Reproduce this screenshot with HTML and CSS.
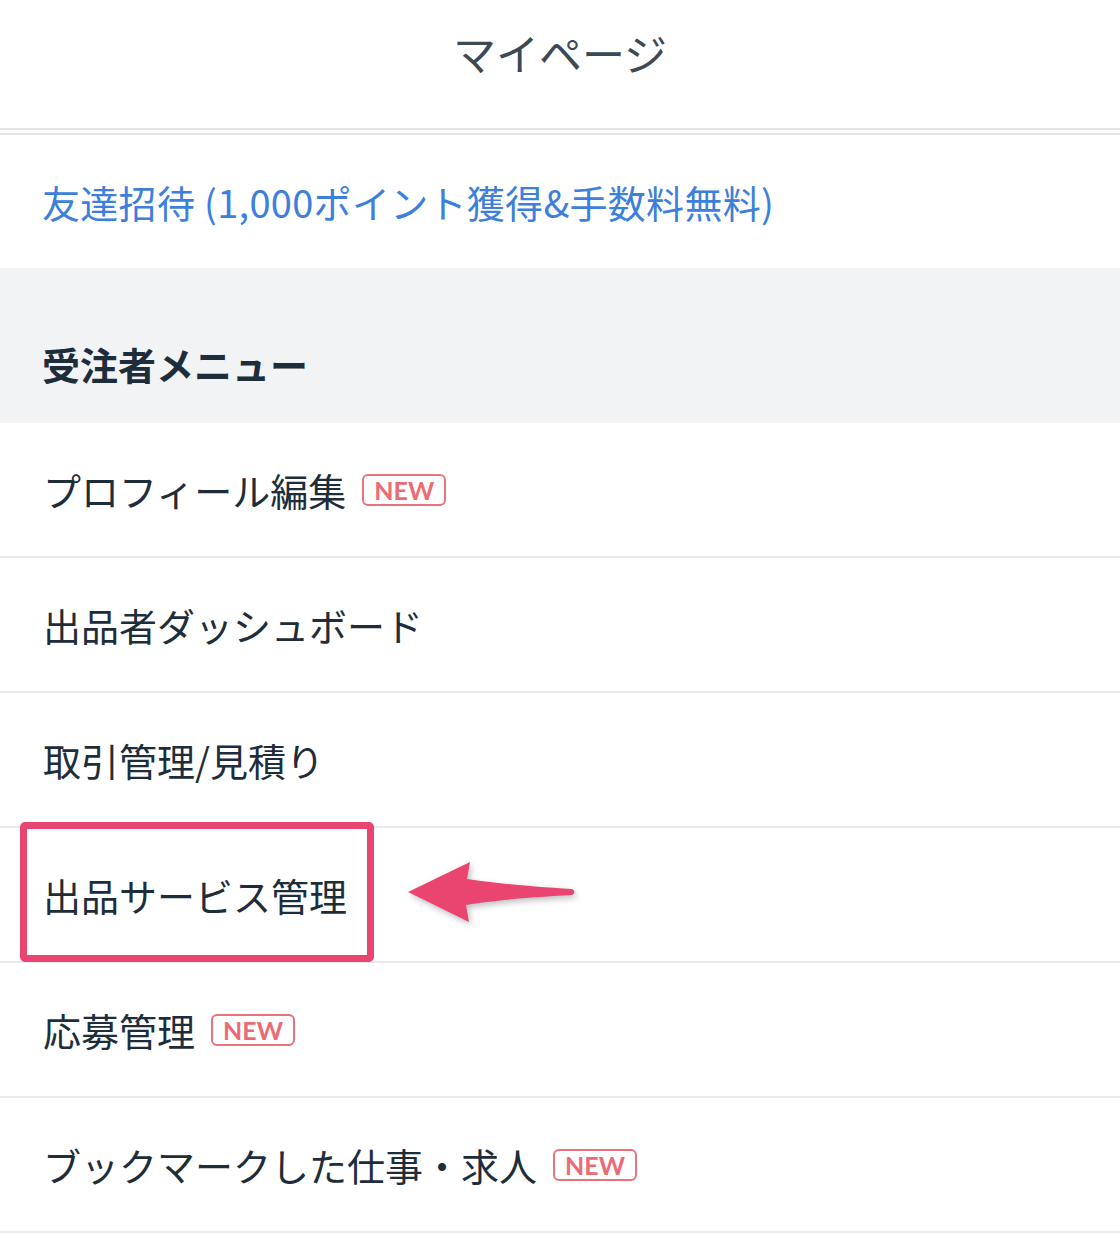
FILE: index.html
```html
<!DOCTYPE html>
<html lang="ja">
<head>
    <meta charset="UTF-8">
    <meta name="viewport" content="width=device-width, initial-scale=1.0">
    <title>マイページ</title>
    <link rel="stylesheet" href="styles.css">
</head>
<body>
    <header class="page-header">
        <h1>マイページ</h1>
    </header>
    <div class="divider"></div>

    <a class="invite" href="#">友達招待 (1,000ポイント獲得&amp;手数料無料)</a>

    <div class="menu-head">受注者メニュー</div>

    <ul class="menu">
        <li><span>プロフィール編集</span><span class="badge">NEW</span></li>
        <li><span>出品者ダッシュボード</span></li>
        <li><span>取引管理/見積り</span></li>
        <li class="highlight">
            <span>出品サービス管理</span>
            <div class="mark-box"></div>
            <svg class="mark-arrow" width="190" height="90" viewBox="400 848 190 90">
                <path d="M408,892 L470,862 L467,879 C500,884 540,887 572,889 Q577,892 572,895 C540,897 500,899 466,905 L469,922 Z" fill="#ea4570"/>
            </svg>
        </li>
        <li><span>応募管理</span><span class="badge">NEW</span></li>
        <li><span>ブックマークした仕事・求人</span><span class="badge">NEW</span></li>
    </ul>
</body>
</html>
```

FILE: styles.css
```css
body {
    margin: 0;
    width: 1120px;
    background-color: #fff;
    font-family: "Noto Sans CJK JP", "Noto Sans", sans-serif;
    color: #1e2d3a;
}
.page-header {
    height: 128px;
    display: flex;
    align-items: center;
    justify-content: center;
}
.page-header h1 {
    margin: 0 0 24px;
    font-size: 43px;
    font-weight: 400;
    color: #3b4954;
}
.divider {
    height: 3px;
    border-top: 2px solid #e3e6e6;
    border-bottom: 2px solid #e3e6e6;
}
.invite {
    display: flex;
    align-items: center;
    height: 133px;
    padding-left: 42px;
    font-size: 38px;
    letter-spacing: 0.3px;
    color: #3d7fdb;
    text-decoration: none;
}
.menu-head {
    box-sizing: border-box;
    height: 155px;
    padding: 36px 0 0 42px;
    display: flex;
    align-items: center;
    background-color: #f2f3f5;
    font-size: 38px;
    font-weight: 700;
}
.menu {
    list-style: none;
    margin: 0;
    padding: 0;
}
.menu li {
    position: relative;
    height: 133px;
    display: flex;
    align-items: center;
    padding-left: 43px;
    border-bottom: 2px solid #e8eaeb;
    font-size: 38px;
}
.badge {
    box-sizing: border-box;
    height: 32px;
    margin-left: 16px;
    padding: 0 10px;
    border: 2px solid #ea727b;
    border-radius: 6px;
    font-family: "Lato", "Noto Sans", sans-serif;
    font-size: 25px;
    font-weight: 700;
    line-height: 28px;
    color: #ea6b75;
}
.mark-box {
    position: absolute;
    left: 20px;
    top: -6px;
    box-sizing: border-box;
    width: 354px;
    height: 140px;
    border: 7px solid #ea4570;
    border-radius: 5px;
}
.mark-arrow {
    position: absolute;
    left: 400px;
    top: 20px;
    filter: drop-shadow(2px 3px 3px rgba(0, 0, 0, 0.25));
}
```
